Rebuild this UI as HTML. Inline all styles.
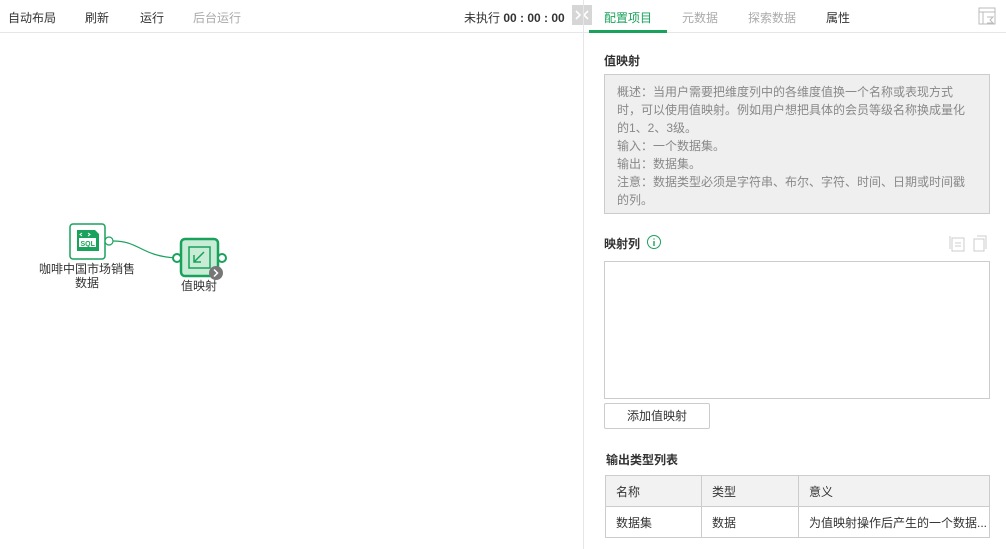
<!DOCTYPE html>
<html><head><meta charset="utf-8"><style>
*{margin:0;padding:0;box-sizing:border-box}
body{width:1006px;height:549px;background:#fff;font-family:"Liberation Sans","Noto Sans CJK SC",sans-serif;font-size:12px;color:#333;position:relative;overflow:hidden}
.a{position:absolute;white-space:nowrap}
</style></head><body>
<div class="a" style="left:0;top:32px;width:584px;height:1px;background:#e4e6ea"></div>
<div class="a" style="left:8px;top:9px">自动布局</div>
<div class="a" style="left:85px;top:9px">刷新</div>
<div class="a" style="left:140px;top:9px">运行</div>
<div class="a" style="left:193px;top:9px;color:#aaa">后台运行</div>
<div class="a" style="left:464px;top:9px">未执行 <b>00 : 00 : 00</b></div>
<div class="a" style="left:572px;top:5px;width:20px;height:20px;background:#d6d6d6"></div>
<svg class="a" style="left:572px;top:5px" width="20" height="20"><path d="M4 6l4 4-4 4M16 6l-4 4 4 4" stroke="#fff" stroke-width="1.6" fill="none"/></svg>
<div class="a" style="left:583px;top:0;width:1px;height:549px;background:#e4e6ea"></div>
<div class="a" style="left:584px;top:32px;width:422px;height:1px;background:#e4e6ea"></div>
<div class="a" style="left:604px;top:9px;color:#19a25b">配置项目</div>
<div class="a" style="left:589px;top:30px;width:78px;height:3px;background:#19a25b"></div>
<div class="a" style="left:682px;top:9px;color:#aaa">元数据</div>
<div class="a" style="left:748px;top:9px;color:#aaa">探索数据</div>
<div class="a" style="left:826px;top:9px">属性</div>
<svg class="a" style="left:978px;top:7px" width="18" height="18"><rect x="1" y="1" width="16" height="16" fill="none" stroke="#bbb"/><path d="M1 5h16M5 5v12M9 10h6l-3 3 3 3H9" stroke="#bbb" fill="none"/></svg>
<div class="a" style="left:604px;top:52px;font-weight:bold">值映射</div>
<div class="a" style="left:604px;top:74px;width:386px;height:140px;background:#efefef;border:1px solid #ccc;color:#888;padding:8px 22px 4px 12px;line-height:18px;white-space:normal">概述：当用户需要把维度列中的各维度值换一个名称或表现方式时，可以使用值映射。例如用户想把具体的会员等级名称换成量化的1、2、3级。<br>输入：一个数据集。<br>输出：数据集。<br>注意：数据类型必须是字符串、布尔、字符、时间、日期或时间戳的列。</div>
<div class="a" style="left:604px;top:235px;font-weight:bold">映射列</div>
<svg class="a" style="left:646px;top:234px" width="16" height="16"><circle cx="8" cy="8" r="6.5" stroke="#19a25b" fill="none"/><path d="M8 7v5M8 4.5v1" stroke="#19a25b" stroke-width="1.4"/></svg>
<svg class="a" style="left:949px;top:235px" width="40" height="18"><rect x="3" y="3" width="12" height="13" fill="none" stroke="#ccc"/><path d="M1 1v13M6 8h6M6 11h6" stroke="#ccc"/><rect x="25" y="4" width="10" height="12" fill="#fff" stroke="#ccc"/><path d="M28 1h9v13" stroke="#ccc" fill="none"/></svg>
<div class="a" style="left:604px;top:261px;width:386px;height:138px;border:1px solid #ccc"></div>
<div class="a" style="left:604px;top:403px;width:106px;height:26px;border:1px solid #ccc;border-radius:2px;text-align:center;line-height:24px">添加值映射</div>
<div class="a" style="left:606px;top:451px;font-weight:bold">输出类型列表</div>
<table class="a" style="left:605px;top:475px;width:385px;border-collapse:collapse;font-size:12px">
<tr style="background:#f2f2f2;height:31px"><td style="border:1px solid #ccc;padding-left:10px;width:96px">名称</td><td style="border:1px solid #ccc;padding-left:10px;width:97px">类型</td><td style="border:1px solid #ccc;padding-left:10px">意义</td></tr>
<tr style="height:31px"><td style="border:1px solid #ccc;padding-left:10px">数据集</td><td style="border:1px solid #ccc;padding-left:10px">数据</td><td style="border:1px solid #ccc;padding-left:10px">为值映射操作后产生的一个数据...</td></tr>
</table>
<svg class="a" style="left:60px;top:220px" width="180" height="60">
<rect x="10" y="4" width="35" height="35" rx="3" fill="#fff" stroke="#19a25b" stroke-width="1.5"/>
<path d="M17 10h18l4 4v17H17z" fill="#19a25b"/>
<rect x="19" y="18" width="17" height="9" fill="#fff"/>
<text x="20.5" y="26" font-size="7" font-family="Liberation Sans" fill="#19a25b" font-weight="bold">SQL</text>
<path d="M22 13l-2 1.5 2 1.5M28 13l2 1.5-2 1.5" stroke="#fff" fill="none"/>
<path d="M53 21C80 21 80 36 117 38" stroke="#19a25b" fill="none" stroke-width="1.2"/>
<circle cx="49" cy="21" r="4" fill="#fff" stroke="#19a25b" stroke-width="1.2"/>
<rect x="121" y="19" width="37" height="37" rx="4" fill="#c9ecd6" stroke="#19a25b" stroke-width="2.5"/>
<rect x="129" y="27" width="21" height="21" fill="none" stroke="#19a25b" stroke-width="1.5"/>
<path d="M144 32l-10 10M134 35v7h7" stroke="#19a25b" stroke-width="1.5" fill="none"/>
<circle cx="117" cy="38" r="4" fill="#fff" stroke="#19a25b" stroke-width="2"/>
<circle cx="162" cy="38" r="4" fill="#fff" stroke="#19a25b" stroke-width="2"/>
<circle cx="156" cy="53" r="7" fill="#777"/>
<path d="M154 49.5l3.5 3.5-3.5 3.5" stroke="#fff" stroke-width="1.5" fill="none"/>
</svg>
<div class="a" style="left:38px;top:262px;width:98px;text-align:center;white-space:normal;line-height:14px">咖啡中国市场销售数据</div>
<div class="a" style="left:181px;top:277px">值映射</div>
</body></html>
